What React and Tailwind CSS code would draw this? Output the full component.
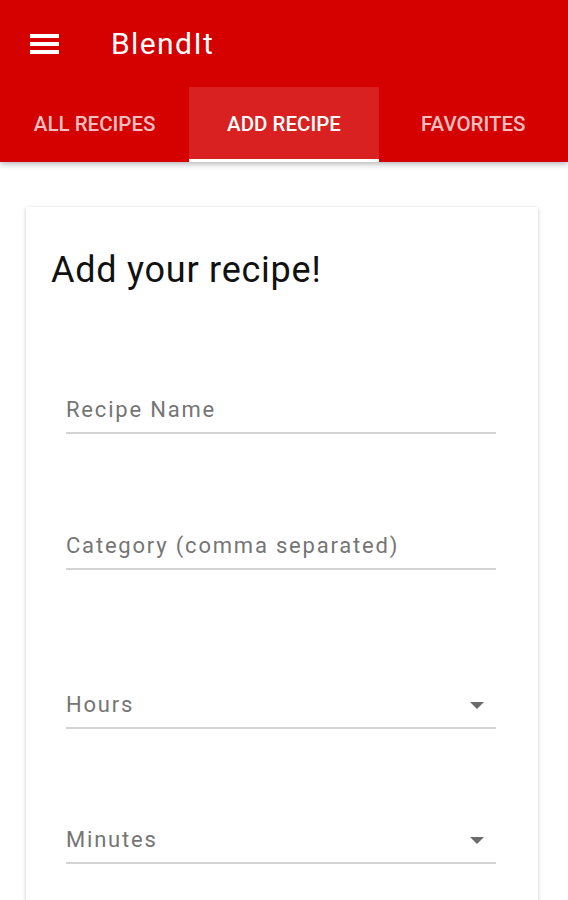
function Field({ label, select, className }) {
  return (
    <div className={className}>
      <div className="flex items-center justify-between h-[30px] text-[22px] leading-[30px] tracking-[1.8px] text-[#757575]">
        <span>{label}</span>
        {select && (
          <svg width="14" height="7" viewBox="0 0 14 7" className="mr-[12px]">
            <path d="M0 0h14L7 7z" fill="#6b6b6b" />
          </svg>
        )}
      </div>
      <div className="mt-[7px] h-[2px] bg-[#d4d4d4]" />
    </div>
  )
}

export default function App() {
  const tabs = ['All Recipes', 'Add Recipe', 'Favorites']

  return (
    <div className="min-h-[900px] bg-white font-['Roboto',sans-serif] overflow-hidden">
      <header className="bg-[#d50000] text-white shadow-[0_2px_6px_rgba(0,0,0,0.3)] relative z-10">
        <div className="h-[87px] flex items-center">
          <div className="ml-[30px] w-[29px] flex flex-col gap-[4px]">
            <span className="h-[4px] bg-white" />
            <span className="h-[4px] bg-white" />
            <span className="h-[4px] bg-white" />
          </div>
          <h1 className="ml-[52px] text-[30px] leading-none tracking-[1.4px]">BlendIt</h1>
        </div>
        <nav className="grid grid-cols-3 h-[75px]">
          {tabs.map((tab, i) => (
            <div
              key={tab}
              className={
                i === 1
                  ? 'flex items-center justify-center uppercase text-[20.5px] font-medium bg-[#da2121] border-b-[3px] border-white pt-[3px]'
                  : 'flex items-center justify-center uppercase text-[20.5px] font-medium text-white/75'
              }
            >
              {tab}
            </div>
          ))}
        </nav>
      </header>

      <main className="pt-[45px]">
        <div className="ml-[26px] mr-[30px] bg-white shadow-[0_1px_4px_rgba(0,0,0,0.22)] pb-[60px]">
          <h2 className="pt-[43px] px-[25px] text-[36px] leading-[40px] tracking-[0.75px] text-[#111]">Add your recipe!</h2>
          <div className="pl-[40px] pr-[42px]">
            <Field label="Recipe Name" className="mt-[105px]" />
            <Field label="Category (comma separated)" className="mt-[97px]" />
            <Field label="Hours" select className="mt-[120px]" />
            <Field label="Minutes" select className="mt-[96px]" />
          </div>
        </div>
      </main>
    </div>
  )
}
